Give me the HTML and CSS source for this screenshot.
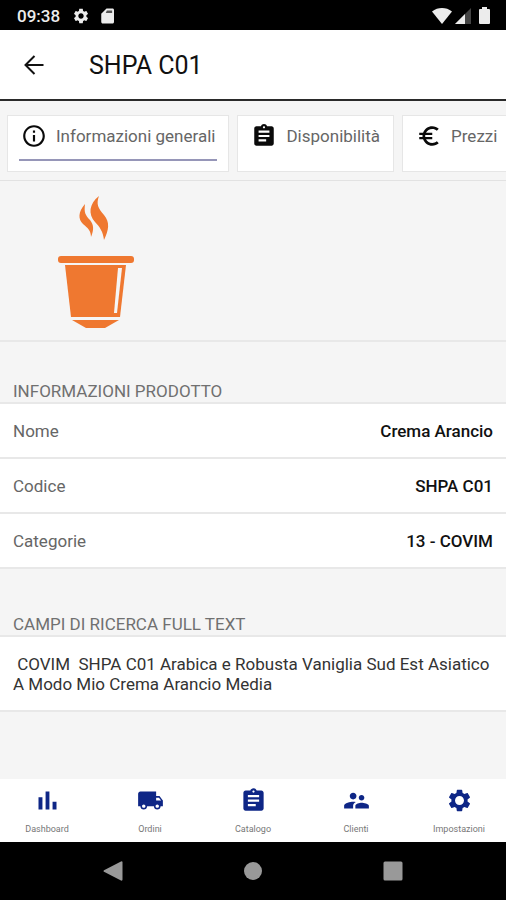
FILE: index.html
```html
<!DOCTYPE html>
<html lang="it">
<head>
<meta charset="utf-8">
<meta name="viewport" content="width=device-width, initial-scale=1">
<title>SHPA C01</title>
<link rel="stylesheet" href="styles.css">
</head>
<body>
<div class="status-bar">
  <span class="clock">09:38</span>
  <svg class="status-icon" viewBox="0 0 24 24"><path d="M19.14 12.94c.04-.3.06-.61.06-.94 0-.32-.02-.64-.07-.94l2.03-1.58c.18-.14.23-.41.12-.61l-1.92-3.32c-.12-.22-.37-.29-.59-.22l-2.39.96c-.5-.38-1.03-.7-1.62-.94l-.36-2.54c-.04-.24-.24-.41-.48-.41h-3.84c-.24 0-.43.17-.47.41l-.36 2.54c-.59.24-1.13.57-1.62.94l-2.39-.96c-.22-.08-.47 0-.59.22L2.74 8.87c-.12.21-.08.47.12.61l2.03 1.58c-.05.3-.09.63-.09.94s.02.64.07.94l-2.03 1.58c-.18.14-.23.41-.12.61l1.92 3.32c.12.22.37.29.59.22l2.39-.96c.5.38 1.03.7 1.62.94l.36 2.54c.05.24.24.41.48.41h3.84c.24 0 .44-.17.47-.41l.36-2.54c.59-.24 1.13-.56 1.62-.94l2.39.96c.22.08.47 0 .59-.22l1.92-3.32c.12-.22.07-.47-.12-.61l-2.01-1.58zM12 15.6c-1.98 0-3.6-1.62-3.6-3.6s1.62-3.6 3.6-3.6 3.6 1.62 3.6 3.6-1.62 3.6-3.6 3.6z"/></svg>
  <svg class="status-icon" viewBox="0 0 24 24"><path d="M18 2h-8L3 9v11c0 1.100.900 2 2 2h13c1.100 0 2-.900 2-2V4c0-1.100-.900-2-2-2z"/><path class="slot" d="M10.500 4.500h7V8H9z"/></svg>
  <span class="status-right">
    <svg class="wifi" viewBox="0 0 20 16"><path d="M10 16L0 3.500C3 1 6.500 0 10 0s7 1 10 3.500z"/></svg>
    <svg class="signal" viewBox="0 0 16 16"><path class="dim" d="M0 16L16 0v16z"/><path d="M0 16L10 6v10z"/></svg>
    <svg class="battery" viewBox="0 0 11 17"><path d="M3 2V0h5v2h2q1 0 1 1v13q0 1-1 1H1q-1 0-1-1V3q0-1 1-1z"/></svg>
  </span>
</div>

<header class="app-bar">
  <button class="back" type="button" aria-label="Indietro">
    <svg viewBox="0 0 20 20"><path d="M19.500 10H1.500M10.500 1L1.500 10l9 9"/></svg>
  </button>
  <h1 class="title">SHPA C01</h1>
</header>

<nav class="tabs">
  <a class="tab active" href="#generali">
    <svg class="tab-icon" viewBox="0 0 24 24"><path d="M11 7h2v2h-2zm0 4h2v6h-2zm1-9C6.480 2 2 6.480 2 12s4.480 10 10 10 10-4.480 10-10S17.520 2 12 2zm0 18c-4.410 0-8-3.590-8-8s3.590-8 8-8 8 3.590 8 8-3.590 8-8 8z"/></svg>
    <span>Informazioni generali</span>
  </a>
  <a class="tab" href="#disponibilita">
    <svg class="tab-icon" viewBox="0 0 24 24"><path d="M19 3h-4.180C14.400 1.840 13.300 1 12 1s-2.400.840-2.820 2H5c-1.100 0-2 .900-2 2v14c0 1.100.900 2 2 2h14c1.100 0 2-.900 2-2V5c0-1.100-.900-2-2-2zm-7 0c.550 0 1 .450 1 1s-.450 1-1 1-1-.450-1-1 .450-1 1-1zm2 14H7v-2h7v2zm3-4H7v-2h10v2zm0-4H7V7h10v2z"/></svg>
    <span>Disponibilità</span>
  </a>
  <a class="tab" href="#prezzi">
    <svg class="tab-icon" viewBox="0 0 24 24"><path d="M15 18.500c-2.510 0-4.680-1.420-5.760-3.500H15v-2H8.580c-.050-.330-.080-.660-.080-1s.030-.670.080-1H15V9H9.240C10.320 6.920 12.500 5.500 15 5.500c1.610 0 3.090.590 4.230 1.570L21 5.300C19.410 3.870 17.300 3 15 3c-3.920 0-7.240 2.510-8.480 6H3v2h3.060c-.040.330-.060.660-.060 1s.020.670.060 1H3v2h3.520c1.240 3.490 4.560 6 8.480 6 2.310 0 4.410-.870 6-2.300l-1.780-1.770c-1.130.980-2.600 1.570-4.220 1.570z"/></svg>
    <span>Prezzi</span>
  </a>
</nav>

<main class="content" id="generali">
  <div class="product-image">
    <svg viewBox="0 0 78 134" role="img" aria-label="Capsula">
      <path d="M42 0C32 8 31 18 38 26c5 5 8 10 9 18 5-10 6-18 0-25-6-7-8-11-5-19z"/>
      <path d="M28 8c-7 8-7 15-2 20 5 4 8 7 8 13 3-7 3-12-1-17-5-5-6-8-5-16z"/>
      <rect x="1" y="60" width="76" height="7" rx="3"/>
      <path d="M8 69h61l-6 52H14z"/>
      <path class="shine" d="M61 72h4l-5 45h-3z"/>
      <path d="M15 124h47l-14 8H29z"/>
    </svg>
  </div>

  <section>
    <h2 class="section-title">INFORMAZIONI PRODOTTO</h2>
    <dl class="list">
      <div class="row"><dt>Nome</dt><dd>Crema Arancio</dd></div>
      <div class="row"><dt>Codice</dt><dd>SHPA C01</dd></div>
      <div class="row"><dt>Categorie</dt><dd>13 - COVIM</dd></div>
    </dl>
  </section>

  <section>
    <h2 class="section-title">CAMPI DI RICERCA FULL TEXT</h2>
    <p class="full-text"> COVIM  SHPA C01 Arabica e Robusta Vaniglia Sud Est Asiatico A Modo Mio Crema Arancio Media</p>
  </section>
</main>

<nav class="bottom-nav">
  <a href="#dashboard">
    <svg viewBox="0 0 24 24"><path d="M4 9h3.500v11H4zM10.300 4h3.400v16h-3.400zM16.500 13H20v7h-3.500z"/></svg>
    <span>Dashboard</span>
  </a>
  <a href="#ordini">
    <svg viewBox="0 0 24 24"><path d="M20 8h-3V4H3c-1.100 0-2 .900-2 2v11h2c0 1.660 1.340 3 3 3s3-1.340 3-3h6c0 1.660 1.340 3 3 3s3-1.340 3-3h2v-5l-3-4zM6 18.500c-.830 0-1.500-.670-1.500-1.500s.670-1.500 1.500-1.500 1.500.670 1.500 1.500-.670 1.500-1.500 1.500zm13.500-9l1.960 2.500H17V9.500h2.500zm-1.500 9c-.830 0-1.500-.670-1.500-1.500s.670-1.500 1.500-1.500 1.500.670 1.500 1.500-.670 1.500-1.500 1.500z"/></svg>
    <span>Ordini</span>
  </a>
  <a href="#catalogo">
    <svg viewBox="0 0 24 24"><path d="M19 3h-4.180C14.400 1.840 13.300 1 12 1s-2.400.840-2.820 2H5c-1.100 0-2 .900-2 2v14c0 1.100.900 2 2 2h14c1.100 0 2-.900 2-2V5c0-1.100-.900-2-2-2zm-7 0c.550 0 1 .450 1 1s-.450 1-1 1-1-.450-1-1 .450-1 1-1zm2 14H7v-2h7v2zm3-4H7v-2h10v2zm0-4H7V7h10v2z"/></svg>
    <span>Catalogo</span>
  </a>
  <a href="#clienti">
    <svg viewBox="0 0 24 24"><path d="M16.500 12c1.380 0 2.490-1.120 2.490-2.500S17.880 7 16.500 7C15.120 7 14 8.120 14 9.500s1.120 2.500 2.500 2.500zM9 11c1.660 0 2.990-1.340 2.990-3S10.660 5 9 5C7.340 5 6 6.340 6 8s1.340 3 3 3zm7.500 3c-1.830 0-5.500.920-5.500 2.750V19h12v-2.250c0-1.830-4.670-2.750-6.500-2.750zM9 13c-2.330 0-8 1.170-8 3.500V19h8v-2.250c0-.850.330-2.340 2.370-3.470C10.500 13.100 9.660 13 9 13z"/></svg>
    <span>Clienti</span>
  </a>
  <a href="#impostazioni">
    <svg viewBox="0 0 24 24"><path d="M19.140 12.940c.040-.300.060-.610.060-.940 0-.320-.020-.640-.070-.940l2.030-1.580c.180-.140.230-.410.120-.610l-1.920-3.320c-.120-.220-.370-.290-.590-.220l-2.390.960c-.500-.380-1.030-.700-1.620-.940l-.360-2.540c-.040-.240-.240-.410-.480-.410h-3.840c-.240 0-.430.170-.470.410l-.360 2.540c-.590.240-1.130.570-1.620.940l-2.390-.960c-.220-.080-.470 0-.590.220L2.740 8.870c-.120.210-.080.470.120.610l2.030 1.580c-.050.300-.090.630-.090.940s.020.640.070.940l-2.030 1.580c-.180.140-.230.410-.120.610l1.920 3.320c.120.220.370.290.590.220l2.390-.960c.500.380 1.030.700 1.620.940l.360 2.540c.050.240.240.410.480.410h3.840c.240 0 .440-.170.470-.410l.360-2.540c.590-.240 1.130-.560 1.620-.940l2.390.960c.220.080.470 0 .590-.220l1.920-3.320c.120-.220.070-.470-.120-.610l-2.010-1.580zM12 16c-2.200 0-4-1.800-4-4s1.800-4 4-4 4 1.800 4 4-1.800 4-4 4z"/></svg>
    <span>Impostazioni</span>
  </a>
</nav>

<div class="system-nav">
  <button type="button" aria-label="Indietro"><svg viewBox="0 0 20 20"><path d="M1 9.200L18 .400q1.500-.500 1.500 1v17.200q0 1.500-1.500 1L1 10.800q-1-.800 0-1.600z"/></svg></button>
  <button type="button" aria-label="Home"><svg viewBox="0 0 20 20"><circle cx="10" cy="10" r="9"/></svg></button>
  <button type="button" aria-label="Recenti"><svg viewBox="0 0 20 20"><rect x=".5" y=".5" width="19" height="19" rx="1.500"/></svg></button>
</div>
</body>
</html>
```

FILE: styles.css
```css
* {
  box-sizing: border-box;
}

body {
  margin: 0;
  min-height: 100vh;
  display: flex;
  flex-direction: column;
  background: #f5f5f5;
  color: #111;
  font-family: Roboto, "Liberation Sans", sans-serif;
  font-size: 17px;
  line-height: 20px;
}

svg {
  display: block;
  fill: currentColor;
}

a {
  color: inherit;
  text-decoration: none;
}

button {
  padding: 0;
  border: 0;
  background: none;
  color: inherit;
}

h1,
h2,
dl,
dd,
p {
  margin: 0;
}

/* Android status bar */
.status-bar {
  display: flex;
  align-items: center;
  gap: 9px;
  height: 30px;
  padding: 1px 16px 0 17px;
  background: #000;
  color: #ececec;
}

.clock {
  margin-right: 3px;
  font-size: 17px;
  font-weight: 500;
}

.status-icon {
  width: 18px;
  height: 18px;
}

.slot {
  fill: #555;
}

.status-right {
  display: flex;
  align-items: center;
  gap: 3px;
  margin-left: auto;
}

.wifi {
  width: 20px;
  height: 16px;
}

.signal {
  width: 16px;
  height: 16px;
}

.dim {
  fill: #444;
}

.battery {
  width: 11px;
  height: 17px;
  margin-left: 5px;
}

/* App bar */
.app-bar {
  display: flex;
  align-items: center;
  gap: 45px;
  height: 71px;
  padding: 0 24px;
  border-bottom: 2px solid #2a2a2a;
  background: #fff;
}

.back svg {
  width: 20px;
  height: 20px;
  fill: none;
  stroke: #111;
  stroke-width: 2;
}

.title {
  padding-top: 3px;
  font-size: 25px;
  font-weight: 400;
  line-height: 32px;
}

/* Tabs */
.tabs {
  display: flex;
  gap: 8px;
  padding: 14px 0 8px 7px;
  border-bottom: 1px solid #e2e2e2;
  overflow: hidden;
}

.tab {
  position: relative;
  display: flex;
  flex: none;
  align-items: center;
  gap: 9px;
  height: 57px;
  padding: 0 13px 16px;
  border: 1px solid #e6e6e6;
  background: #fff;
  color: #666;
  white-space: nowrap;
}

.tab.active::after {
  content: "";
  position: absolute;
  right: 11px;
  bottom: 10px;
  left: 11px;
  height: 2px;
  background: #9696b8;
}

.tab-icon {
  width: 26px;
  height: 26px;
  color: #0a0a0a;
}

/* Content */
.content {
  flex: 1;
}

.product-image {
  height: 161px;
  padding: 15px 0 0 57px;
  border-bottom: 2px solid #e8e8e8;
  color: #ef7830;
}

.product-image svg {
  width: 78px;
  height: 134px;
}

.shine {
  fill: #f5f5f5;
}

.section-title {
  padding: 38px 13px 0;
  color: #707070;
  font-size: 17px;
  font-weight: 400;
  line-height: 22px;
}

.list {
  margin-bottom: 6px;
  border-top: 2px solid #e8e8e8;
}

.row {
  display: flex;
  align-items: center;
  justify-content: space-between;
  height: 55px;
  padding: 0 13px;
  border-bottom: 2px solid #e8e8e8;
  background: #fff;
}

.row dt {
  color: #666;
}

.row dd {
  font-weight: 500;
}

.full-text {
  padding: 17px 8px 16px 13px;
  border-top: 2px solid #e8e8e8;
  border-bottom: 2px solid #e8e8e8;
  background: #fff;
  color: #333;
  white-space: pre-wrap;
}

/* App navigation */
.bottom-nav {
  display: grid;
  grid-template-columns: repeat(5, 52px);
  justify-content: space-between;
  height: 63px;
  padding: 8px 21px 0;
  background: #fff;
}

.bottom-nav a {
  display: flex;
  flex-direction: column;
  align-items: center;
  gap: 9px;
  color: #777;
  font-size: 9px;
  line-height: 12px;
}

.bottom-nav svg {
  width: 27px;
  height: 27px;
  color: #0e2686;
}

/* Android navigation */
.system-nav {
  display: flex;
  align-items: center;
  justify-content: center;
  gap: 120px;
  height: 58px;
  background: #000;
  color: #999;
}

.system-nav svg {
  width: 20px;
  height: 20px;
}
```
